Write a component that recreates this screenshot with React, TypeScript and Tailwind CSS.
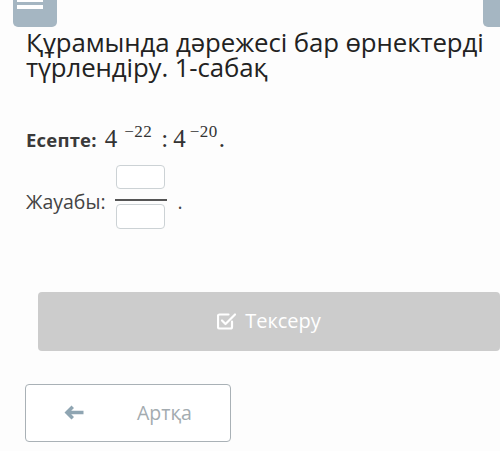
export default function App() {
  return (
    <div className="relative w-[500px] h-[451px] overflow-hidden bg-[#fdfdfd] font-['Open_Sans',sans-serif]">
      <div className="flex justify-between h-[27px]">
        <div className="ml-[13px] w-[44px] h-[27px] bg-[#a5b6c2] rounded-b-[5px] flex flex-col gap-[3px] pl-[4px]">
          <div className="w-[26px] h-[2px] bg-white" />
          <div className="w-[26px] h-[4px] bg-white" />
        </div>
        <div className="w-[17px] h-[27px] bg-[#a5b6c2] rounded-bl-[5px]" />
      </div>

      <h1 className="pl-[26px] pr-[6px] text-[25.8px] leading-[25px] text-[#222] font-normal mt-[3px] tracking-[-0.1px]">
        Құрамында дәрежесі бар өрнектерді түрлендіру. 1-сабақ
      </h1>

      <div className="px-[26px]">
        <div className="mt-[40px] flex items-baseline text-[18.5px] text-[#3a3a3a]">
          <span className="font-bold tracking-[0.2px]">Есепте:</span>
          <span className="ml-[8px] font-['Liberation_Serif',serif] text-[#333] text-[25px]">
            4<sup className="text-[17px] relative top-[-10px] ml-[7px] tracking-[0.5px]">−22</sup>
            <span className="ml-[9px]">:</span>
            <span className="ml-[5px]">4</span>
            <sup className="text-[17px] relative top-[-10px] ml-[4px] tracking-[0.5px]">−20</sup>
            <span className="ml-[1px]">.</span>
          </span>
        </div>

        <div className="mt-[7px] flex items-start text-[19.5px] text-[#444]">
          <span className="mt-[22px]">Жауабы:</span>
          <div className="ml-[9px] flex flex-col items-center">
            <div className="w-[49px] h-[24px] border border-[#ccd2d5] rounded-[4px] bg-white" />
            <div className="w-[52px] h-[2px] bg-[#555] mt-[10px] mb-[3px]" />
            <div className="w-[49px] h-[25px] border border-[#ccd2d5] rounded-[4px] bg-white" />
          </div>
          <span className="ml-[11px] mt-[22px]">.</span>
        </div>
      </div>

      <div className="mt-[63px] ml-[38px] w-[462px] h-[59px] bg-[#cccccc] rounded-[4px] flex items-center justify-center gap-[8px] text-white text-[20px]">
        <svg width="20" height="18" viewBox="0 0 20 18" fill="none" stroke="white" strokeWidth="2.2" strokeLinejoin="round" strokeLinecap="round">
          <path d="M15 9.5V15a1.5 1.5 0 0 1-1.5 1.5h-11A1.5 1.5 0 0 1 1 15V4a1.5 1.5 0 0 1 1.5-1.5h9" />
          <path d="M5 8.5l3.5 3.5L18 2.5" />
        </svg>
        <span>Тексеру</span>
      </div>

      <div className="mt-[33px] ml-[25px] w-[206px] h-[58px] border border-[#a9b1b6] rounded-[4px] bg-white flex items-center">
        <svg className="ml-[38px]" width="20" height="15" viewBox="0 0 20 15" fill="#8fa5b2">
          <path d="M7.5 0.5L0.5 7.5L7.5 14.5L10 12L7.2 9.3H19.5V5.7H7.2L10 3Z" />
        </svg>
        <span className="ml-[53px] text-[19.5px] text-[#a3abb0]">Артқа</span>
      </div>
    </div>
  );
}
